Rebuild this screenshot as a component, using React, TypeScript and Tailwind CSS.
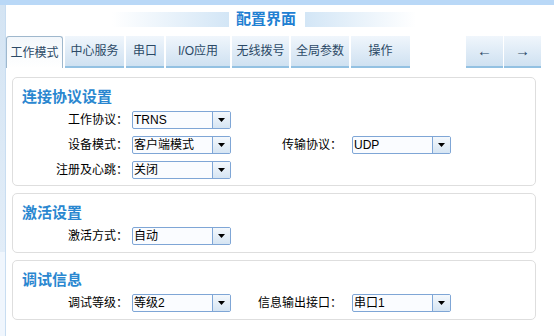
const font = { fontFamily: '"Liberation Sans", "Noto Sans CJK SC", sans-serif' };

const tabs = [
  { label: '工作模式', w: 'w-[57px]', active: true },
  { label: '中心服务', w: 'w-[59px]' },
  { label: '串口', w: 'w-[38px]' },
  { label: 'I/O应用', w: 'w-[64px]' },
  { label: '无线拨号', w: 'w-[57px]' },
  { label: '全局参数', w: 'w-[58px]' },
  { label: '操作', w: 'w-[59px]' },
];

function Select({ value }: { value: string }) {
  return (
    <div className="flex h-[18px] w-[99px] shrink-0 rounded-[2px] border border-[#7fa6d6] bg-[#fafcff]">
      <div className="flex-1 overflow-hidden whitespace-nowrap pl-[1px] text-[12px] leading-[16px] text-black">{value}</div>
      <div className="flex w-[18px] items-center justify-center border-l border-[#7fa6d6] bg-gradient-to-b from-[#f4f8fc] to-[#d6e5f3]">
        <svg width="7" height="4" viewBox="0 0 7 4"><path d="M0 0h7L3.5 4z" fill="#000" /></svg>
      </div>
    </div>
  );
}

function Row({ label, value, label2, value2 }: { label: string; value: string; label2?: string; value2?: string }) {
  return (
    <div className="flex h-[18px] items-center">
      <div className="w-[115px] shrink-0 text-right text-[12px] leading-[18px] text-black">{label}：</div>
      <div className="ml-[4px]"><Select value={value} /></div>
      {label2 ? (
        <>
          <div className="w-[111px] shrink-0 text-right text-[12px] leading-[18px] text-black">{label2}：</div>
          <div className="ml-[10px]"><Select value={value2 ?? ''} /></div>
        </>
      ) : null}
    </div>
  );
}

function Panel({ title, children, h }: { title: string; children: React.ReactNode; h: string }) {
  return (
    <section className={`ml-[6px] w-[524px] ${h} rounded-[5px] border border-[#dedede] bg-white pt-[9px]`}>
      <h3 className="pl-[9px] text-[15px] font-bold leading-[20px] text-[#2a87d0]">{title}</h3>
      <div className="mt-[4px] flex flex-col gap-[7px]">{children}</div>
    </section>
  );
}

export default function App() {
  return (
    <div className="flex h-[336px] w-[554px] flex-col overflow-hidden bg-white" style={font}>
      <div className="h-[5px] shrink-0 bg-[#b9d8f7]" />
      <div className="flex flex-1">
        <div className="flex w-[6px] shrink-0 flex-col border-r border-[#c8ddf1]">
          <div className="h-[247px] bg-gradient-to-b from-[#d4e4f3] to-[#e2edf8]" />
          <div className="flex-1 bg-[#f0f6fd]" />
        </div>
        <div className="flex-1">
          <div className="flex h-[31px] items-start pt-[7px]">
            <div className="ml-[106px] h-[15px] w-[117px] bg-gradient-to-r from-white to-[#d3e6f6]" />
            <div className="ml-[7px] mt-[-3px] text-[15px] font-bold leading-[20px] text-[#1f80d2]">配置界面</div>
            <div className="ml-[9px] h-[15px] w-[111px] bg-gradient-to-r from-[#d3e6f6] to-white" />
          </div>
          <div className="flex h-[32px]">
            <div className="flex gap-[2px]">
              {tabs.map((t) =>
                t.active ? (
                  <div key={t.label} className={`${t.w} flex items-center justify-center rounded-t-[3px] border border-b-0 border-[#9fb8cd] bg-gradient-to-b from-[#f3f7fb] to-white text-[12px] text-[#2b4966]`}>
                    {t.label}
                  </div>
                ) : (
                  <div key={t.label} className={`${t.w} flex items-center justify-center border-b-2 border-[#93c1e2] bg-gradient-to-b from-[#f0f6fc] to-[#cfe1f1] text-[12px] text-[#2b4966]`}>
                    {t.label}
                  </div>
                )
              )}
            </div>
            <div className="ml-[56px] flex gap-[1px]">
              {['←', '→'].map((a) => (
                <div key={a} className="flex w-[37px] items-center justify-center border-b-2 border-[#93c1e2] bg-gradient-to-b from-[#f0f6fc] to-[#cfe1f1] text-[15px] text-[#2b4966]">
                  {a}
                </div>
              ))}
            </div>
          </div>
          <div className="mt-[9px] flex flex-col gap-[7px]">
            <Panel title="连接协议设置" h="h-[109px]">
              <Row label="工作协议" value="TRNS" />
              <Row label="设备模式" value="客户端模式" label2="传输协议" value2="UDP" />
              <Row label="注册及心跳" value="关闭" />
            </Panel>
            <Panel title="激活设置" h="h-[60px]">
              <Row label="激活方式" value="自动" />
            </Panel>
            <Panel title="调试信息" h="h-[60px]">
              <Row label="调试等级" value="等级2" label2="信息输出接口" value2="串口1" />
            </Panel>
          </div>
        </div>
      </div>
    </div>
  );
}
